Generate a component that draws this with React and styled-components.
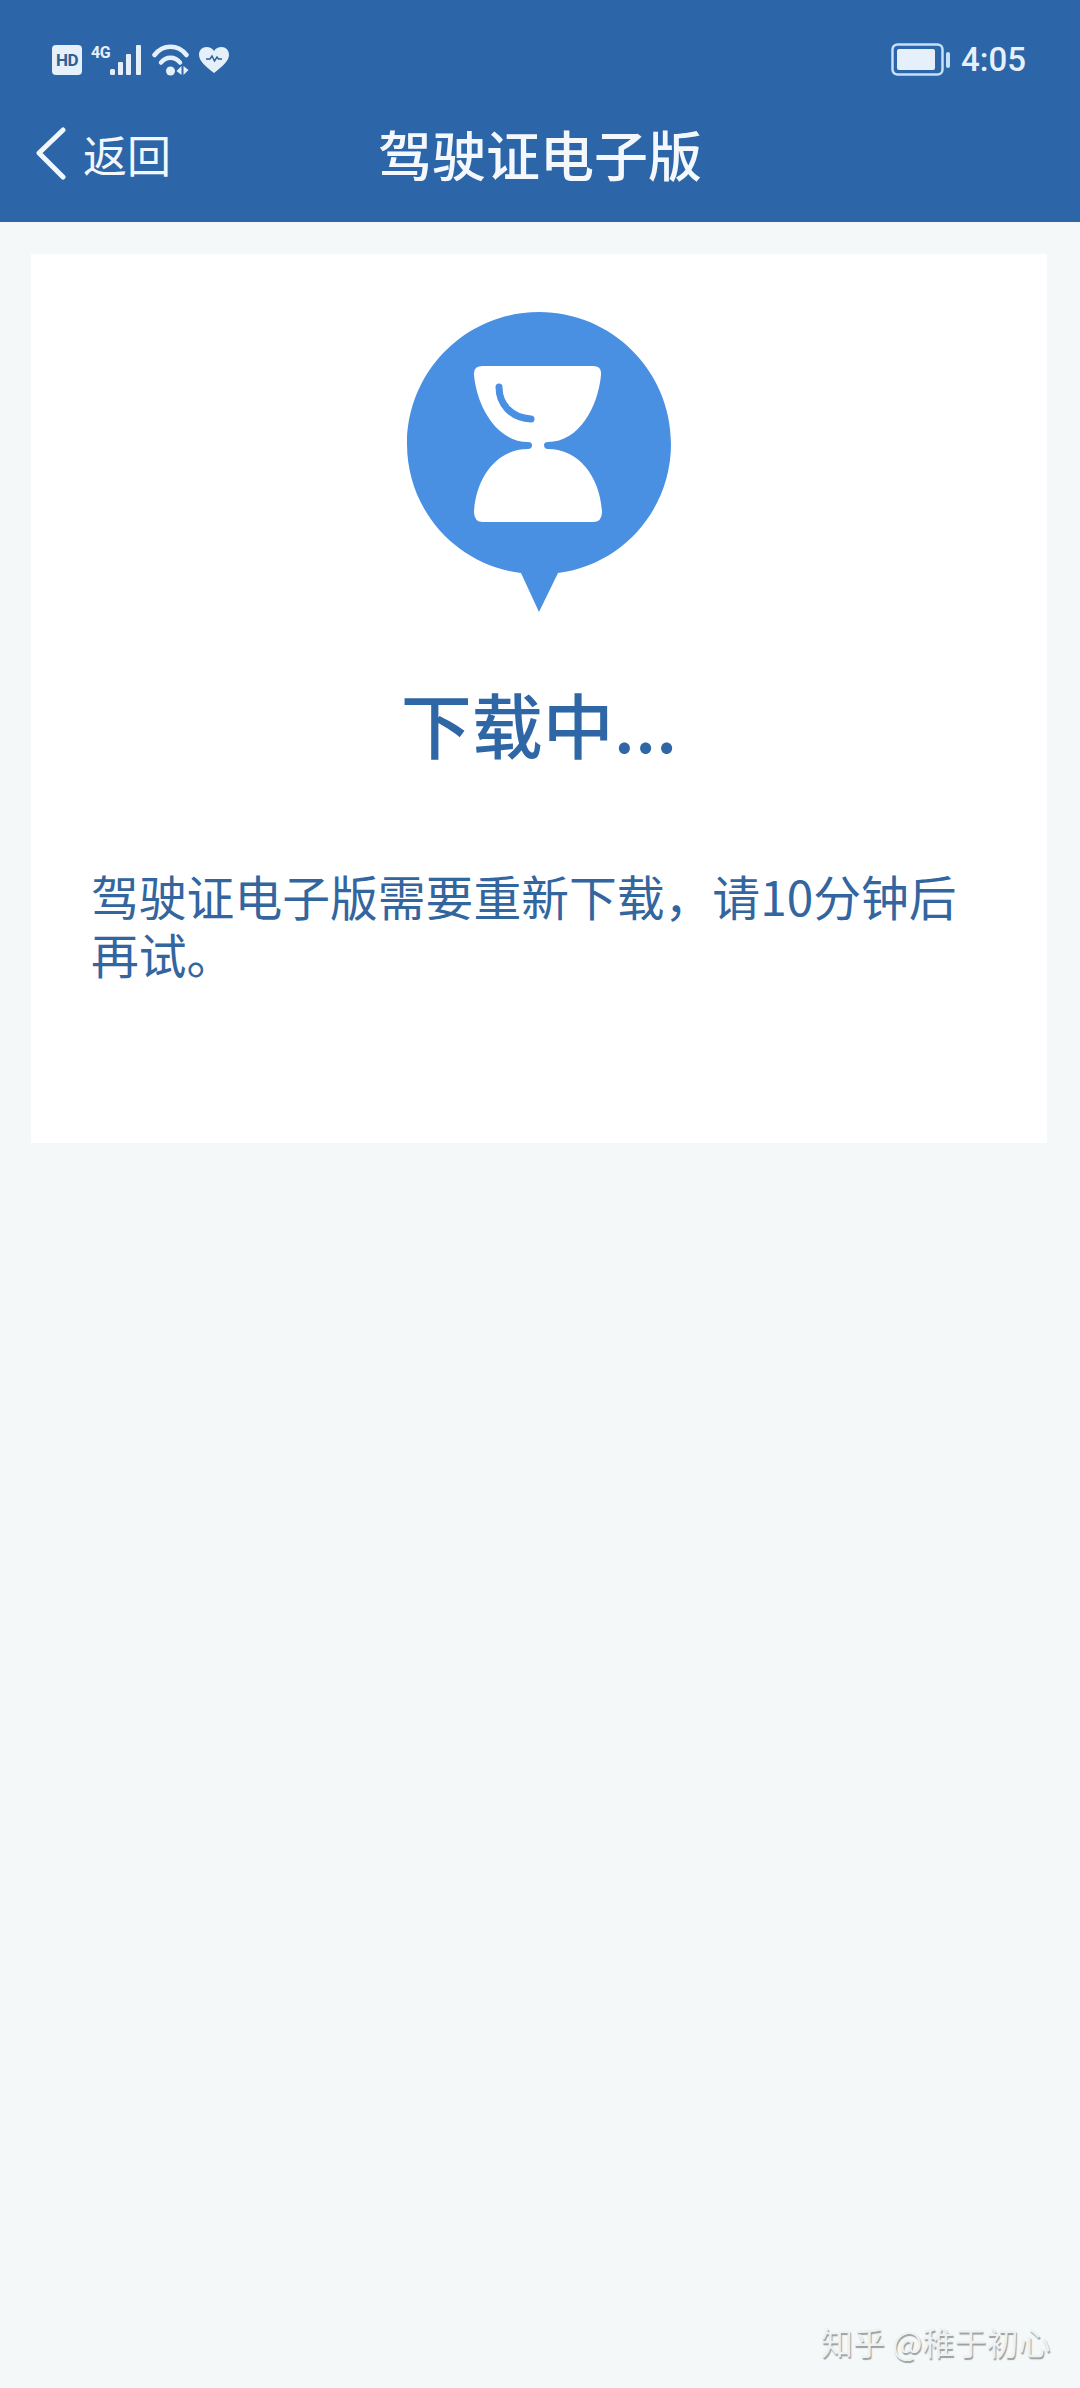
import styled, { createGlobalStyle } from "styled-components";

const GlobalStyle = createGlobalStyle`
  html, body {
    margin: 0;
    padding: 0;
    background: #f5f8f8;
  }
  * {
    box-sizing: border-box;
  }
`;

const Page = styled.div`
  position: relative;
  width: 1080px;
  height: 2388px;
  overflow: hidden;
  background: #f5f8f8;
  font-family: "Noto Sans CJK SC", "Noto Sans", sans-serif;
`;

const Header = styled.header`
  height: 222px;
  background: #2c65a8;
  color: #eef5fb;
  padding: 40px 52px 0 52px;
  display: flex;
  flex-direction: column;
`;

const StatusBar = styled.div`
  height: 40px;
  display: flex;
  align-items: center;
  justify-content: space-between;
`;

const StatusGroup = styled.div`
  display: flex;
  align-items: center;
  gap: ${(p) => p.$gap || 0}px;
`;

const HdBadge = styled.span`
  width: 30px;
  height: 30px;
  border-radius: 4px;
  background: #e6f0fa;
  color: #2f5f98;
  display: flex;
  align-items: center;
  justify-content: center;
  font-family: Roboto, sans-serif;
  font-size: 17px;
  font-weight: 700;
  line-height: 30px;
  letter-spacing: -0.5px;
`;

const Clock = styled.span`
  font-family: Roboto, "Liberation Sans", sans-serif;
  font-size: 33px;
  font-weight: 500;
  line-height: 40px;
  color: #e6f0fa;
  margin-right: 2px;
`;

const NavBar = styled.nav`
  position: relative;
  margin: 41px 0 0 -18px;
  height: 66px;
  display: flex;
  align-items: center;
  gap: 17px;
`;

const BackLabel = styled.span`
  font-size: 44px;
  line-height: 66px;
  color: #f2f7fc;
`;

const Title = styled.h1`
  position: absolute;
  left: -34px;
  right: -52px;
  top: 0;
  margin: 0;
  text-align: center;
  font-size: 54px;
  font-weight: 500;
  line-height: 66px;
  color: #f4f8fc;
  pointer-events: none;
`;

const Card = styled.section`
  margin: 32px 33px 0 31px;
  height: 889px;
  background: #ffffff;
  padding: 58px 0 0;
  display: flex;
  flex-direction: column;
  align-items: center;
`;

const Heading = styled.h2`
  margin: 60px 0 0;
  font-size: 71px;
  font-weight: 500;
  line-height: 100px;
  color: #2f66a6;
  text-align: center;
`;

const Message = styled.p`
  align-self: stretch;
  margin: 95px 0 0;
  padding: 0 58px 0 60px;
  font-size: 47.8px;
  line-height: 58px;
  color: #33659f;
`;

const Watermark = styled.span`
  position: absolute;
  left: 821px;
  top: 2321px;
  font-size: 32px;
  line-height: 40px;
  white-space: nowrap;
  color: #eef1f1;
  text-shadow: 1px 2px 1px #9a9e9e;
`;

function SignalIcon() {
  return (
    <svg width="52" height="32" viewBox="0 0 52 32">
      <text
        x="0"
        y="14"
        fontFamily="Roboto, sans-serif"
        fontWeight="700"
        fontSize="16"
        letterSpacing="-0.5"
        fill="#e6f0fa"
      >
        4G
      </text>
      <g fill="#e6f0fa">
        <rect x="19" y="25" width="5" height="6" rx="1.5" />
        <rect x="27" y="18" width="5" height="13" rx="1" />
        <rect x="35" y="10" width="5" height="21" rx="1" />
        <rect x="45" y="1" width="5" height="30" rx="1" />
      </g>
    </svg>
  );
}

function WifiIcon() {
  return (
    <svg width="37" height="32" viewBox="0 0 37 32">
      <g fill="none" stroke="#e6f0fa" strokeWidth="4.5" strokeLinecap="round">
        <path d="M2.5 11 C 11 0, 26 0, 34.5 11" />
        <path d="M9 18.5 C 14 12, 23 12, 28 18.5" />
      </g>
      <circle cx="18.5" cy="27" r="4.5" fill="#e6f0fa" />
      <path d="M24.5 27 L29.5 22 V31 Z M31.5 22 V31 L36.5 26 Z" fill="#e6f0fa" />
    </svg>
  );
}

function HeartIcon() {
  return (
    <svg width="32" height="28" viewBox="0 0 32 28">
      <path
        d="M16 27 C 7 20, 1 15, 1 8.5 C 1 4, 4.5 1, 8.5 1 C 11.5 1, 14.5 2.5, 16 5 C 17.5 2.5, 20.5 1, 23.5 1 C 27.5 1, 31 4, 31 8.5 C 31 15, 25 20, 16 27 Z"
        fill="#e6f0fa"
      />
      <path
        d="M8 13 H12 L14 10 L16.5 15 L19 11 L20.5 13 H24"
        fill="none"
        stroke="#2f5f98"
        strokeWidth="1.5"
      />
    </svg>
  );
}

function BatteryIcon() {
  return (
    <svg width="60" height="34" viewBox="0 0 60 34">
      <rect x="1.5" y="1.5" width="50" height="30" rx="5" fill="none" stroke="#c5e0f7" strokeWidth="2.5" />
      <rect x="6" y="6" width="38" height="21" rx="2" fill="#e6f0fb" />
      <rect x="55" y="9" width="4" height="16" rx="2" fill="#c5e0f7" />
    </svg>
  );
}

function BackIcon() {
  return (
    <svg width="32" height="54" viewBox="0 0 32 54">
      <path d="M29 3 L5 26 L29 50" fill="none" stroke="#f2f7fc" strokeWidth="5" strokeLinecap="round" strokeLinejoin="round" />
    </svg>
  );
}

function HourglassBadge() {
  return (
    <svg width="264" height="300" viewBox="0 0 264 300">
      <path
        d="M132 0 C 205 0, 264 59, 264 132 C 264 198, 215 253, 151 261 L132 300 L114 261 C 49 253, 0 198, 0 132 C 0 59, 59 0, 132 0 Z"
        fill="#4a90e2"
      />
      <path
        d="M76 54 H186 Q 195 54 194 63 C 191 95, 172 130, 141 130 Q 137 130 137 133 Q 137 137 141 137 C 172 137, 193 165, 195 200 Q 195 210 186 210 H76 Q 67 210 67 200 C 69 165, 90 137, 121 137 Q 125 137 125 133 Q 125 130 121 130 C 90 130, 70 95, 67 63 Q 66 54 76 54 Z"
        fill="#ffffff"
      />
      <path
        d="M92 75 C 92 92, 104 106, 124 107"
        fill="none"
        stroke="#4a90e2"
        strokeWidth="7"
        strokeLinecap="round"
      />
    </svg>
  );
}

export default function App() {
  return (
    <Page>
      <GlobalStyle />
      <Header>
        <StatusBar>
          <StatusGroup $gap={9}>
            <HdBadge>HD</HdBadge>
            <SignalIcon />
            <WifiIcon />
            <HeartIcon />
          </StatusGroup>
          <StatusGroup $gap={10}>
            <BatteryIcon />
            <Clock>4:05</Clock>
          </StatusGroup>
        </StatusBar>
        <NavBar>
          <BackIcon />
          <BackLabel>返回</BackLabel>
          <Title>驾驶证电子版</Title>
        </NavBar>
      </Header>
      <Card>
        <HourglassBadge />
        <Heading>下载中...</Heading>
        <Message>驾驶证电子版需要重新下载，请10分钟后再试。</Message>
      </Card>
      <Watermark>知乎 @稚于初心</Watermark>
    </Page>
  );
}
